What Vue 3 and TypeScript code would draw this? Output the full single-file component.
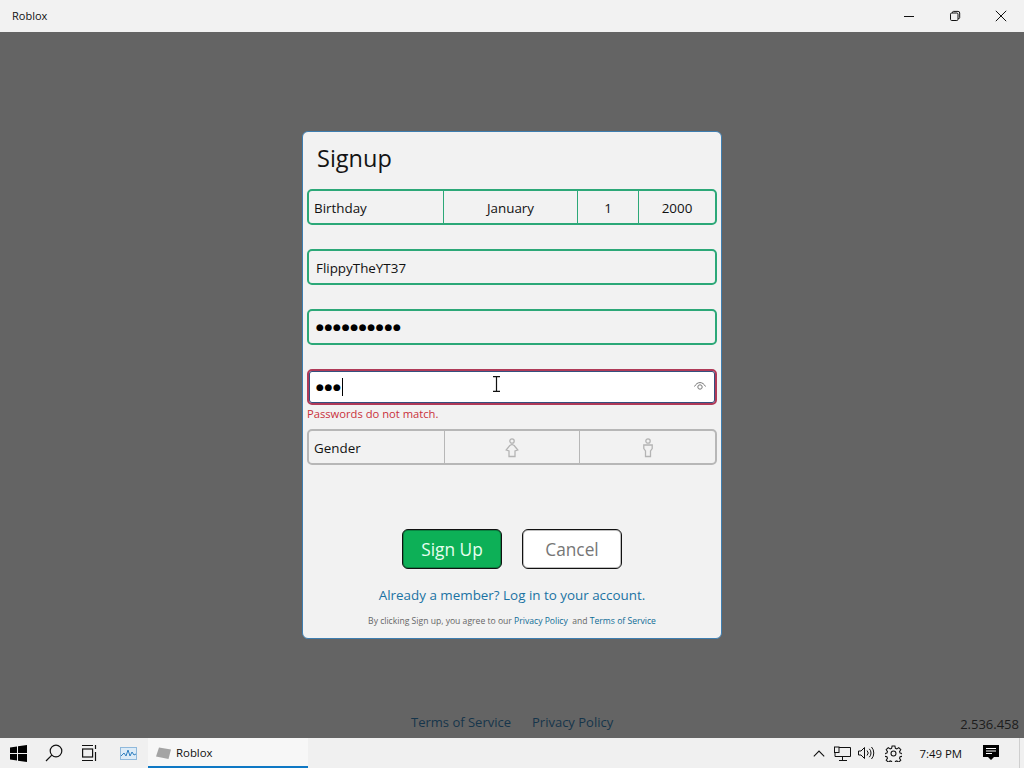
<script setup lang="ts">
const username: string = 'FlippyTheYT37'
const password: string = '●●●●●●●●●●'
const confirmPassword: string = '●●●'
const dateCells = [
  { label: 'January', cls: 'month' },
  { label: '1', cls: 'day' },
  { label: '2000', cls: 'year' },
]
</script>

<template>
  <div class="window">
    <header class="titlebar">
      <span class="app-name">Roblox</span>
      <div class="controls">
        <span class="ctl">
          <svg width="12" height="12" viewBox="0 0 12 12"><path d="M1 6.500h10" stroke="#111" fill="none" /></svg>
        </span>
        <span class="ctl">
          <svg width="12" height="12" viewBox="0 0 12 12" fill="none" stroke="#111"><rect x="1.500" y="3" width="7.500" height="7.500" rx="1.200" /><path d="M3.500 3V2.400a1 1 0 0 1 1-1h4.600a1.600 1.600 0 0 1 1.600 1.600v4.600a1 1 0 0 1-1 1H9" /></svg>
        </span>
        <span class="ctl">
          <svg width="12" height="12" viewBox="0 0 12 12"><path d="M.8.8l10.400 10.400M11.200.8L.8 11.200" stroke="#111" fill="none" /></svg>
        </span>
      </div>
    </header>

    <main class="stage">
      <section class="modal">
        <h1 class="title">Signup</h1>

        <div class="field green split">
          <span class="cell-label birthday">Birthday</span>
          <span v-for="c in dateCells" :key="c.cls" class="cell green-div" :class="c.cls">{{ c.label }}</span>
        </div>

        <div class="field green gap"><span class="value">{{ username }}</span></div>
        <div class="field green gap"><span class="value dots">{{ password }}</span></div>

        <div class="field red gap">
          <span class="value dots">{{ confirmPassword }}</span><i class="caret"></i>
          <svg class="eye" width="14" height="12" viewBox="0 0 14 12" fill="none" stroke="#777" stroke-width="1">
            <path d="M1.500 6.500C3 3.800 4.800 2.600 7 2.600s4 1.200 5.500 3.900" />
            <circle cx="7" cy="7" r="2.200" />
          </svg>
          <svg class="ibeam" width="9" height="16" viewBox="0 0 9 16" fill="none" stroke="#111" stroke-width="1.200">
            <path d="M1 .7h7M1 15.300h7M4.500 .7v14.600" />
          </svg>
        </div>
        <p class="error">Passwords do not match.</p>

        <div class="field grey split">
          <span class="cell-label gender">Gender</span>
          <span class="cell grey-div g1">
            <svg width="14" height="20" viewBox="0 0 14 20" fill="none" stroke="#b4b4b4" stroke-width="1.300">
              <circle cx="7" cy="3" r="2.200" />
              <path d="M7 6.500l2.200 1 3.600 4.500-2.800 1v5.500H4V13L1.200 12l3.600-4.500z" />
            </svg>
          </span>
          <span class="cell grey-div g2">
            <svg width="14" height="20" viewBox="0 0 14 20" fill="none" stroke="#b4b4b4" stroke-width="1.300">
              <circle cx="7" cy="3" r="2.200" />
              <path d="M2.800 7h8.400v3.500L9.500 13v5.500h-5V13L2.800 10.500z" />
            </svg>
          </span>
        </div>

        <div class="actions">
          <button class="btn primary" type="button">Sign Up</button>
          <button class="btn secondary" type="button">Cancel</button>
        </div>

        <a class="login">Already a member? Log in to your account.</a>
        <p class="legal">By clicking Sign up, you agree to our <a>Privacy Policy</a>&nbsp; and <a>Terms of Service</a></p>
      </section>

      <nav class="footer-links">
        <a>Terms of Service</a>
        <a>Privacy Policy</a>
      </nav>
      <span class="version">2.536.458</span>
    </main>

    <footer class="taskbar">
      <div class="tb-left">
        <span class="tb-btn w36">
          <svg width="17" height="17" viewBox="0 0 17 17" fill="#000"><path d="M0 2.400l7-1v6.600H0zM8 1.300L17 0v8H8zM0 9h7v6.600l-7-1zM8 9h9v8l-9-1.300z" /></svg>
        </span>
        <span class="tb-btn w36">
          <svg width="18" height="18" viewBox="0 0 18 18" fill="none" stroke="#111" stroke-width="1.200"><circle cx="11" cy="7" r="5.800" /><path d="M6.800 11.200L1 17" /></svg>
        </span>
        <span class="tb-btn w36">
          <svg width="16" height="18" viewBox="0 0 16 18" fill="none" stroke="#111" stroke-width="1.200"><path d="M0 1.500h11M0 16.500h11M13.500 1v4M13.500 8v9" /><rect x=".6" y="5" width="10" height="8" /></svg>
        </span>
        <span class="tb-btn w42">
          <svg width="17" height="13" viewBox="0 0 17 13"><rect x=".5" y=".5" width="16" height="12" fill="#dcebf7" stroke="#8fb9dc" /><path d="M1 9l3-3 2 3 2-6 2 6 2-4 2 3 2-1" stroke="#2f7fc0" fill="none" /></svg>
        </span>
        <span class="tb-task">
          <svg width="15" height="13" viewBox="0 0 15 13"><path d="M3 1.500l12 2-2.500 9.500L0 10.500z" fill="#a4a4a4" /></svg>
          <span>Roblox</span>
        </span>
      </div>
      <div class="tray">
        <svg class="t-chev" width="12" height="7" viewBox="0 0 12 7" fill="none" stroke="#111" stroke-width="1.100"><path d="M.8 6.300L6 1l5.200 5.300" /></svg>
        <svg class="t-net" width="17" height="15" viewBox="0 0 17 15" fill="none" stroke="#111"><path d="M5 1.500h11.500v9H1V7" /><rect x=".5" y="1" width="4.500" height="5.500" /><path d="M8.500 10.500v3.500M5 14.500h8" /></svg>
        <svg class="t-vol" width="17" height="14" viewBox="0 0 17 14" fill="none" stroke="#111"><path d="M.5 5v4h2.500l3.500 3.500v-11L3 5z" /><path d="M9 4.500a3.500 3.500 0 0 1 0 5M11.300 2.800a6 6 0 0 1 0 8.400M13.500 1a9 9 0 0 1 0 12" /></svg>
        <svg class="t-gear" width="17" height="17" viewBox="0 0 24 24" fill="none" stroke="#111" stroke-width="1.500"><circle cx="12" cy="12" r="3.500" /><path d="M10 1.500h4l.7 3.200 2 .8 2.700-1.800 2.900 2.900-1.800 2.700.8 2 3.200.7v4l-3.200.7-.8 2 1.800 2.700-2.900 2.900-2.700-1.800-2 .8-.7 3.200h-4l-.7-3.200-2-.8-2.700 1.800-2.900-2.900 1.800-2.700-.8-2-3.200-.7v-4l3.200-.7.800-2-1.800-2.700 2.900-2.900 2.700 1.800 2-.8z" /></svg>
        <span class="t-time">7:49 PM</span>
        <svg class="t-note" width="16" height="16" viewBox="0 0 16 16"><path d="M0 0h16v12h-5l-3 3-3-3H0z" fill="#000" /><path d="M3 3.500h10M3 6h10M3 8.500h6" stroke="#fff" /></svg>
        <span class="show-desktop"></span>
      </div>
    </footer>
  </div>
</template>

<style>
html, body { margin: 0; padding: 0; }
</style>

<style scoped>
.window {
  width: 1024px;
  height: 768px;
  display: flex;
  flex-direction: column;
  overflow: hidden;
  font-family: "Open Sans", "Noto Sans", sans-serif;
  color: #111;
}
.titlebar {
  height: 32px;
  flex: none;
  display: flex;
  align-items: center;
  justify-content: space-between;
  background: #f2f2f2;
}
.app-name { margin-left: 12px; font-size: 11px; margin-top: -1px; }
.controls { display: flex; }
.ctl {
  width: 46px;
  height: 32px;
  display: flex;
  align-items: center;
  justify-content: center;
}
.stage {
  position: relative;
  flex: 1;
  background: #646464;
  display: flex;
  align-items: center;
  justify-content: center;
}
.modal {
  box-sizing: border-box;
  width: 420px;
  height: 508px;
  padding: 0 4px;
  background: #f2f2f2;
  border: 1px solid #3f7eb0;
  border-radius: 6px;
  display: flex;
  flex-direction: column;
}
.title {
  margin: 0;
  height: 57px;
  padding-left: 10px;
  font-size: 23.500px;
  font-weight: 400;
  line-height: 53px;
  color: #141414;
}
.field {
  box-sizing: border-box;
  position: relative;
  height: 36px;
  flex: none;
  padding-top: 1px;
  border: 2px solid;
  border-radius: 5px;
  display: flex;
  align-items: center;
  font-size: 13.400px;
}
.green { border-color: #2ca878; }
.grey { border-color: #b7b7b7; }
.red { border-color: #b03a58; background: #fff; box-shadow: inset 0 0 0 1px #34507f; }
.gap { margin-top: 24px; }
.split { align-items: stretch; padding-top: 0; }
.split > span { padding-top: 1px; }
.value { margin-left: 7px; }
.dots {
  font-family: "DejaVu Sans", sans-serif;
  font-size: 9px;
  letter-spacing: 0.7px;
  color: #000;
  margin-top: -2px;
}
.caret { width: 1px; height: 18px; background: #000; margin-top: -1px; }
.cell-label { box-sizing: border-box; display: flex; align-items: center; padding-left: 5px; }
.birthday { width: 134px; }
.gender { width: 135px; }
.cell { box-sizing: border-box; display: flex; align-items: center; justify-content: center; }
.green-div { border-left: 1px solid #2ca878; }
.grey-div { border-left: 1px solid #b7b7b7; }
.month { width: 134px; }
.day { width: 61px; }
.year { flex: 1; }
.g1 { width: 135px; }
.g2 { flex: 1; }
.eye { position: absolute; right: 8px; top: 9px; }
.ibeam { position: absolute; left: 183px; top: 5px; }
.error {
  margin: 0;
  height: 24px;
  font-size: 11.200px;
  line-height: 18px;
  color: #c9303a;
}
.actions {
  margin-top: 64px;
  display: flex;
  justify-content: center;
  gap: 20px;
}
.btn {
  box-sizing: border-box;
  width: 100px;
  height: 40px;
  padding: 0;
  border: 1px solid #111;
  border-radius: 6px;
  box-shadow: inset 0 0 0 1px rgba(0, 0, 0, 0.25);
  font-family: inherit;
  font-size: 17.300px;
}
.primary { background: #0db057; color: #e8fff0; }
.secondary { background: #fff; color: #767676; }
.login {
  margin-top: 16px;
  height: 20px;
  line-height: 20px;
  text-align: center;
  font-size: 13.400px;
  color: #1a72a3;
}
.legal {
  margin: 8px 0 0;
  text-align: center;
  font-size: 8.600px;
  line-height: 16px;
  color: #666;
}
.legal a { color: #0f6c96; }
.footer-links {
  position: absolute;
  left: 411px;
  top: 681px;
  display: flex;
  gap: 21px;
  font-size: 13px;
  color: #16354b;
}
.version {
  position: absolute;
  right: 5px;
  top: 683px;
  font-size: 13px;
  color: #1c1c1c;
}
.taskbar {
  height: 30px;
  flex: none;
  display: flex;
  justify-content: space-between;
  background: #f0f0f0;
  font-size: 11.400px;
}
.tb-left { display: flex; }
.tb-btn {
  height: 30px;
  display: flex;
  align-items: center;
  justify-content: center;
}
.w36 { width: 36px; }
.w42 { width: 40px; }
.tb-task {
  box-sizing: border-box;
  width: 160px;
  height: 30px;
  padding-left: 8px;
  display: flex;
  align-items: center;
  gap: 5px;
  background: #f7f7f7;
  border-bottom: 2px solid #0f78c4;
}
.tray {
  display: flex;
  align-items: center;
}
.t-chev { margin-right: 9px; }
.t-net { margin-right: 7px; }
.t-vol { margin-right: 10px; }
.t-gear { margin-right: 17px; }
.t-time { margin-right: 21px; }
.t-note { margin-right: 20px; }
.show-desktop {
  box-sizing: border-box;
  width: 5px;
  height: 30px;
  border-left: 1px solid #cfcfcf;
}
</style>
